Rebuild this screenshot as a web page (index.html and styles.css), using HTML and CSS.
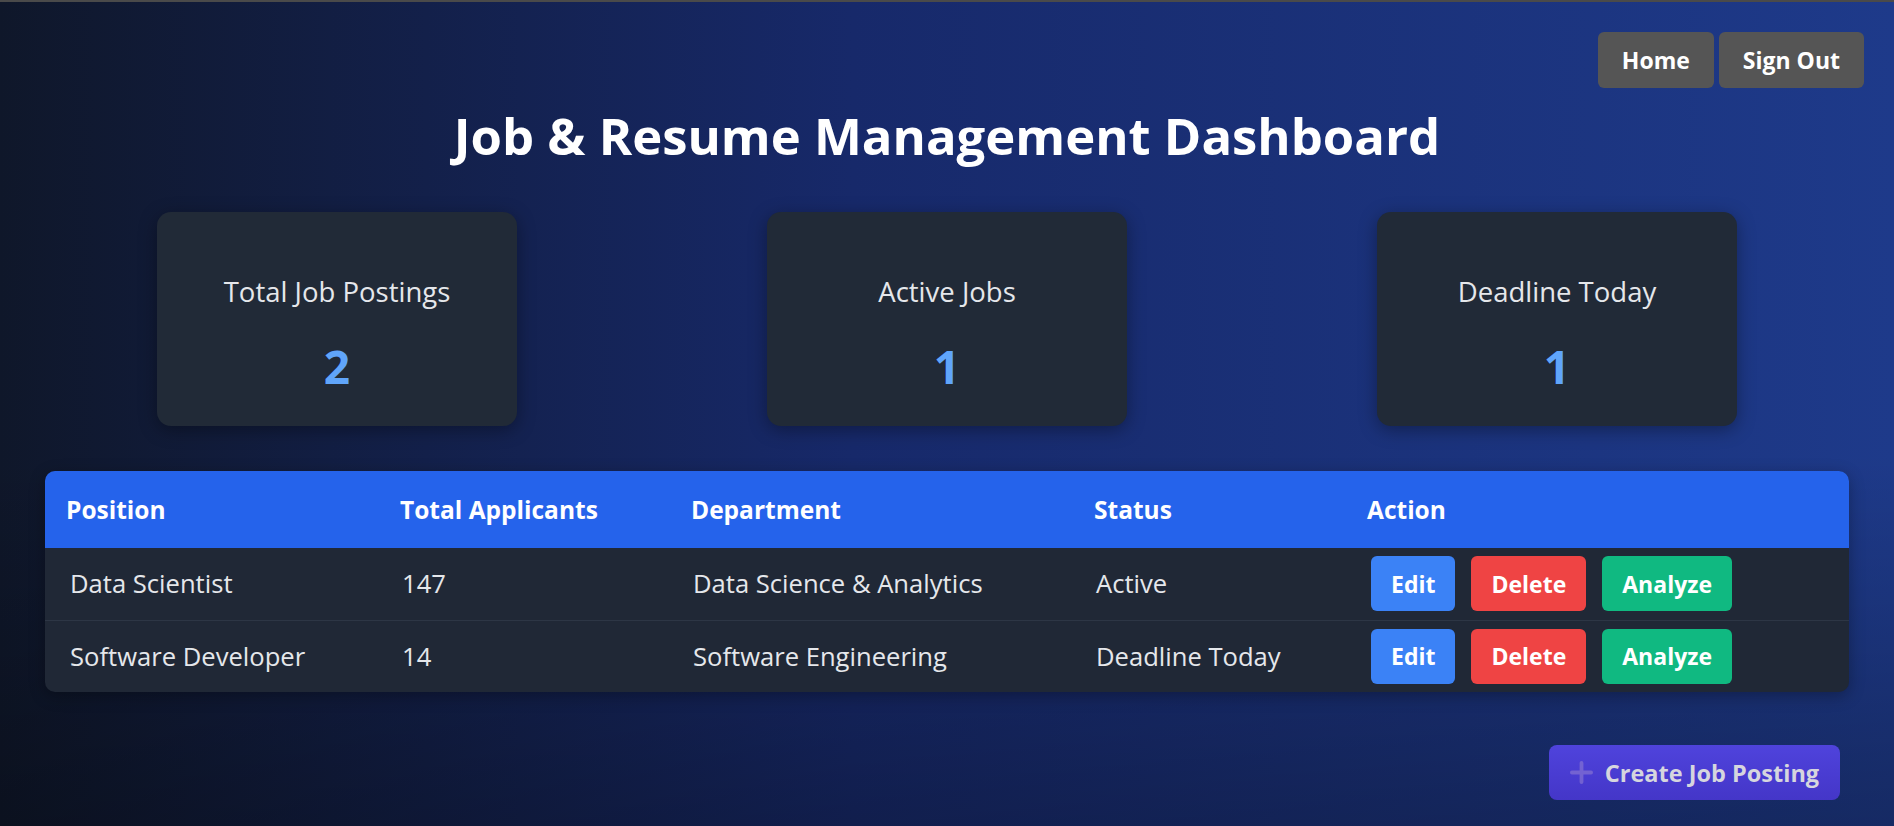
FILE: index.html
```html
<!DOCTYPE html>
<html lang="en">
<head>
<meta charset="utf-8">
<title>Job &amp; Resume Management Dashboard</title>
<link rel="stylesheet" href="styles.css">
</head>
<body>
<div class="page">
  <nav class="topbar">
    <button class="nav-btn">Home</button>
    <button class="nav-btn">Sign Out</button>
  </nav>
  <h1 class="title">Job &amp; Resume Management Dashboard</h1>
  <section class="stats">
    <div class="card">
      <div class="card-label">Total Job Postings</div>
      <div class="card-value">2</div>
    </div>
    <div class="card">
      <div class="card-label">Active Jobs</div>
      <div class="card-value">1</div>
    </div>
    <div class="card">
      <div class="card-label">Deadline Today</div>
      <div class="card-value">1</div>
    </div>
  </section>
  <div class="table-wrap">
    <table class="jobs">
      <colgroup>
        <col class="c1"><col class="c2"><col class="c3"><col class="c4"><col class="c5">
      </colgroup>
      <thead>
        <tr><th>Position</th><th>Total Applicants</th><th>Department</th><th>Status</th><th>Action</th></tr>
      </thead>
      <tbody>
        <tr>
          <td>Data Scientist</td><td>147</td><td>Data Science &amp; Analytics</td><td>Active</td>
          <td><div class="actions"><button class="btn edit">Edit</button><button class="btn del">Delete</button><button class="btn analyze">Analyze</button></div></td>
        </tr>
        <tr>
          <td>Software Developer</td><td>14</td><td>Software Engineering</td><td>Deadline Today</td>
          <td><div class="actions"><button class="btn edit">Edit</button><button class="btn del">Delete</button><button class="btn analyze">Analyze</button></div></td>
        </tr>
      </tbody>
    </table>
  </div>
  <div class="footer-row">
    <button class="create-btn">
      <svg class="plus" viewBox="0 0 24 24" width="24" height="24"><path d="M12 2v20M2 12h20" stroke="currentColor" stroke-width="4" stroke-linecap="round" fill="none"/></svg>
      <span>Create Job Posting</span>
    </button>
  </div>
</div>
</body>
</html>
```

FILE: styles.css
```css
* { box-sizing: border-box; }
html, body { margin: 0; padding: 0; }
body {
  min-height: 100vh;
  font-family: "Open Sans", "Noto Sans", sans-serif;
  color: #fff;
  border-top: 2px solid #4a4a4a;
  background:
    linear-gradient(to bottom, rgba(0,0,0,0) 55%, rgba(0,0,0,0.28) 100%),
    linear-gradient(to right, #0f172a 0%, #17296a 45%, #1e3a8a 100%);
  overflow: hidden;
}
.page { padding: 0 45px; height: 824px; }
.topbar {
  display: flex;
  justify-content: flex-end;
  gap: 5px;
  padding-top: 30px;
  margin-right: -15px;
}
.nav-btn {
  height: 56px;
  padding: 0 24px;
  border: none;
  border-radius: 6px;
  background: #555555;
  color: #fff;
  font-family: inherit;
  font-weight: 700;
  font-size: 23px;
}
.title {
  margin: 0;
  text-align: center;
  font-size: 50.8px;
  font-weight: 700;
  line-height: 64px;
  margin-top: 16px;
}
.stats {
  display: flex;
  justify-content: center;
  gap: 250px;
  margin-top: 44px;
}
.card {
  width: 360px;
  height: 214px;
  background: #212a37;
  border-radius: 14px;
  box-shadow: 0 4px 18px rgba(0,0,0,0.35);
  display: flex;
  flex-direction: column;
  align-items: center;
  padding-top: 58px;
}
.card-label {
  font-size: 27.5px;
  line-height: 44px;
  color: #e5e7eb;
}
.card-value {
  font-size: 46px;
  font-weight: 700;
  line-height: 60px;
  margin-top: 22px;
  color: #60a5fa;
}
.table-wrap {
  margin-top: 45px;
  border-radius: 10px;
  overflow: hidden;
  background: #202836;
  box-shadow: 0 4px 16px rgba(0,0,0,0.3);
}
.jobs {
  width: 100%;
  border-collapse: collapse;
  table-layout: fixed;
}
.c1 { width: 334px; }
.c2 { width: 291px; }
.c3 { width: 403px; }
.c4 { width: 273px; }
.jobs thead tr { background: #2563eb; }
.jobs th {
  height: 77px;
  text-align: left;
  padding: 0 0 0 21px;
  font-size: 24.5px;
  font-weight: 700;
}
.jobs td {
  height: 72px;
  padding: 0 0 0 23px;
  font-size: 25.6px;
  color: #e5e7eb;
  border-top: 1px solid #2d3645;
}
.jobs td:first-child { padding-left: 25px; }
.jobs tbody tr:first-child td { border-top: none; }
.actions { display: flex; gap: 16px; }
.jobs td:last-child { padding-left: 25px; }
.btn {
  height: 55px;
  padding: 0 20px;
  border: none;
  border-radius: 6px;
  color: #fff;
  font-family: inherit;
  font-size: 23px;
  font-weight: 700;
}
.edit { background: #3b82f6; }
.del { background: #ef4444; }
.analyze { background: #10b981; }
.footer-row {
  display: flex;
  justify-content: flex-end;
  margin-top: 53px;
  margin-right: 9px;
}
.create-btn {
  height: 55px;
  width: 291px;
  display: flex;
  align-items: center;
  justify-content: center;
  gap: 12px;
  border: none;
  border-radius: 8px;
  background: linear-gradient(to bottom, #4f43dc, #4436c8);
  color: #d6d6de;
  font-family: inherit;
  font-size: 23.5px;
  font-weight: 700;
}
.plus { color: rgba(150,130,210,0.55); width: 23px; height: 23px; }
```
